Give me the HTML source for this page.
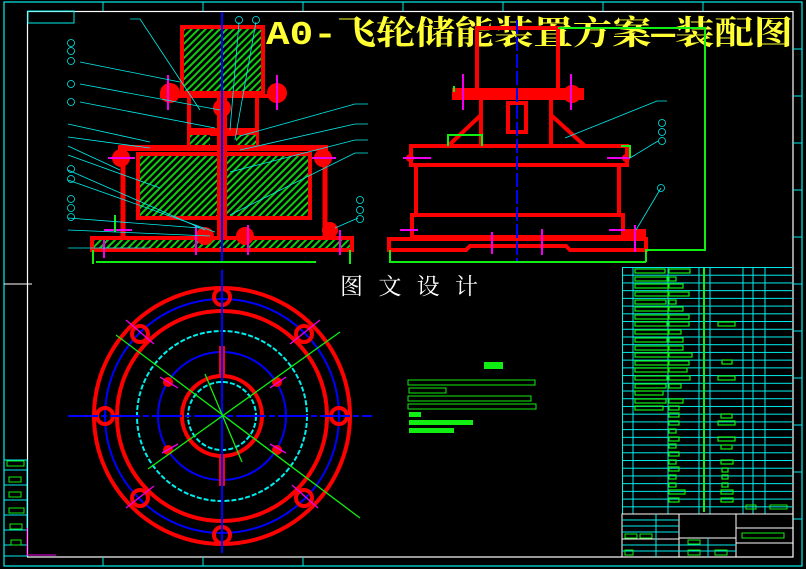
<!DOCTYPE html><html><head><meta charset="utf-8"><style>body{margin:0;background:#000}svg{display:block}</style></head><body>
<svg width="806" height="569" viewBox="0 0 806 569" xmlns="http://www.w3.org/2000/svg" font-family="Liberation Sans, Noto Sans CJK SC, sans-serif">
<defs>
<pattern id="h" width="5" height="5" patternUnits="userSpaceOnUse" patternTransform="rotate(45)"><rect width="5" height="5" fill="#000"/><rect width="2" height="5" fill="#1c1"/></pattern>
<pattern id="rows" width="200" height="7.72" patternUnits="userSpaceOnUse" y="267"><rect width="200" height="1" fill="#0ee"/></pattern>
</defs>
<rect width="806" height="569" fill="#000"/>
<rect x="4" y="2" width="798" height="564" fill="none" stroke="#0ee" stroke-width="1.2"/>
<rect x="27.5" y="11.5" width="765.5" height="545.5" fill="none" stroke="#fff" stroke-width="1.2"/>
<g stroke="#0ee" stroke-width="1"><line x1="103" y1="2" x2="103" y2="11"/><line x1="203" y1="2" x2="203" y2="11"/><line x1="303" y1="2" x2="303" y2="11"/><line x1="403" y1="2" x2="403" y2="11"/><line x1="503" y1="2" x2="503" y2="11"/><line x1="603" y1="2" x2="603" y2="11"/><line x1="703" y1="2" x2="703" y2="11"/>
<line x1="103" y1="557" x2="103" y2="566"/><line x1="203" y1="557" x2="203" y2="566"/><line x1="303" y1="557" x2="303" y2="566"/>
<line x1="793" y1="49" x2="802" y2="49"/><line x1="793" y1="96" x2="802" y2="96"/><line x1="793" y1="143" x2="802" y2="143"/><line x1="793" y1="190" x2="802" y2="190"/><line x1="793" y1="237" x2="802" y2="237"/><line x1="793" y1="284" x2="802" y2="284"/><line x1="793" y1="331" x2="802" y2="331"/><line x1="793" y1="378" x2="802" y2="378"/><line x1="793" y1="425" x2="802" y2="425"/><line x1="793" y1="472" x2="802" y2="472"/><line x1="793" y1="519" x2="802" y2="519"/>
<rect x="28" y="11" width="46" height="12" fill="none"/></g>
<line x1="4" y1="284" x2="32" y2="284" stroke="#fff"/>
<g fill="none" stroke="#0ee"><rect x="4" y="460" width="23" height="96"/><line x1="4" y1="470" x2="27" y2="470"/><line x1="4" y1="485" x2="27" y2="485"/><line x1="4" y1="500" x2="27" y2="500"/><line x1="4" y1="515" x2="27" y2="515"/><line x1="4" y1="530" x2="27" y2="530"/><line x1="4" y1="545" x2="27" y2="545"/></g>
<g fill="none" stroke="#1e1"><rect x="7" y="461" width="17" height="5"/><rect x="9" y="477" width="12" height="5"/><rect x="9" y="492" width="12" height="5"/><rect x="9" y="508" width="15" height="5"/><rect x="10" y="524" width="12" height="5"/><rect x="11" y="540" width="10" height="5"/></g>
<path d="M27 528V555H56" fill="none" stroke="#e0e"/>
<text x="266" y="44" font-size="33" font-weight="bold" fill="#ff3" font-family="Liberation Mono, Noto Serif CJK SC, serif" textLength="527" lengthAdjust="spacingAndGlyphs">A0-飞轮储能装置方案—装配图</text>
<text x="340" y="294" font-size="23" fill="#fff" font-family="Noto Serif CJK SC, serif" textLength="138" lengthAdjust="spacing">图文设计</text>
<g stroke="#f00" fill="none">
<rect x="182" y="27" width="81" height="66" fill="url(#h)" stroke-width="4"/>
<rect x="92" y="238" width="260" height="12" fill="url(#h)" stroke-width="4"/>
<rect x="138" y="154" width="172" height="64" fill="url(#h)" stroke-width="4"/>
<line x1="118" y1="148" x2="328" y2="148" stroke-width="6"/>
<line x1="189" y1="95" x2="189" y2="145" stroke-width="4"/><line x1="257" y1="95" x2="257" y2="145" stroke-width="4"/>
<line x1="123" y1="152" x2="123" y2="238" stroke-width="5"/><line x1="325" y1="152" x2="325" y2="238" stroke-width="5"/>
<line x1="160" y1="96" x2="286" y2="96" stroke-width="4"/>
<line x1="222" y1="95" x2="222" y2="238" stroke-width="10"/>
</g>
<g fill="#f00"><circle cx="170" cy="93" r="10"/><circle cx="277" cy="93" r="10"/><circle cx="121" cy="158" r="9"/><circle cx="323" cy="158" r="9"/><circle cx="222" cy="108" r="9"/><circle cx="330" cy="230" r="8"/><circle cx="205" cy="236" r="9"/><circle cx="245" cy="236" r="9"/><rect x="188" y="128" width="70" height="8"/></g>
<rect x="190" y="135" width="20" height="10" fill="url(#h)"/><rect x="236" y="135" width="20" height="10" fill="url(#h)"/>
<line x1="222" y1="12" x2="222" y2="262" stroke="#00f" stroke-width="2"/>
<g stroke="#e0e" stroke-width="2"><line x1="168" y1="75" x2="168" y2="110"/><line x1="277" y1="75" x2="277" y2="110"/><line x1="108" y1="158" x2="135" y2="158"/><line x1="312" y1="158" x2="336" y2="158"/><line x1="104" y1="230" x2="132" y2="230"/><line x1="104" y1="240" x2="104" y2="258"/><line x1="196" y1="225" x2="196" y2="255"/><line x1="248" y1="225" x2="248" y2="255"/><line x1="340" y1="230" x2="340" y2="255"/></g>
<g stroke="#1e1" stroke-width="2" fill="none"><line x1="96" y1="262" x2="316" y2="262"/><line x1="93" y1="250" x2="93" y2="264"/><line x1="350" y1="250" x2="350" y2="264"/><path d="M115 215V232"/></g>
<g stroke="#0ee" stroke-width="0.8" fill="none">
<path d="M130 19H140L200 110"/><path d="M80 62L180 82"/><path d="M80 84L220 110"/><path d="M80 102L215 128"/><path d="M68 124L150 142"/><path d="M68 137L150 148"/><path d="M68 146L120 170"/><path d="M68 155L160 188"/><path d="M68 170L205 230"/><path d="M68 180L215 232"/><path d="M68 218L200 228"/><path d="M68 230L210 236"/><path d="M68 248L150 248"/>
<path d="M368 104H355L240 136"/><path d="M368 124H355L240 150"/><path d="M368 140H355L230 172"/><path d="M368 153H355L230 215"/><path d="M358 218L335 228"/>
<path d="M239 22L230 130"/><path d="M256 22L235 140"/>
<circle cx="71" cy="43" r="3.5"/><circle cx="71" cy="51" r="3.5"/><circle cx="71" cy="61" r="3.5"/><circle cx="71" cy="84" r="3.5"/><circle cx="71" cy="102" r="3.5"/><circle cx="71" cy="169" r="3.5"/><circle cx="71" cy="179" r="3.5"/><circle cx="71" cy="199" r="3.5"/><circle cx="71" cy="208" r="3.5"/><circle cx="71" cy="217" r="3.5"/><circle cx="239" cy="20" r="3.5"/><circle cx="256" cy="20" r="3.5"/><circle cx="360" cy="200" r="3.5"/><circle cx="360" cy="210" r="3.5"/><circle cx="360" cy="219" r="3.5"/>
</g>
<g stroke="#f00" fill="none" stroke-width="4">
<rect x="477" y="28" width="81" height="66"/>
<rect x="454" y="90" width="128" height="8" fill="#f00"/>
<rect x="508" y="103" width="18" height="29"/>
<line x1="481" y1="98" x2="481" y2="146"/><line x1="551" y1="98" x2="551" y2="146"/>
<line x1="481" y1="115" x2="448" y2="146"/><line x1="551" y1="115" x2="585" y2="146"/>
<rect x="411" y="146" width="216" height="19"/>
<line x1="416" y1="165" x2="416" y2="216"/><line x1="619" y1="165" x2="619" y2="216"/>
<rect x="412" y="215" width="211" height="22"/>
<path d="M389 239H646V250H570L566 246H470L466 250H389Z"/>
</g>
<circle cx="572" cy="94" r="9" fill="#f00"/><circle cx="410" cy="158" r="4" fill="#f00"/><circle cx="626" cy="158" r="4" fill="#f00"/><rect x="624" y="229" width="22" height="10" fill="#f00"/>
<line x1="517" y1="20" x2="517" y2="262" stroke="#00f" stroke-width="2" stroke-dasharray="14 3"/>
<g stroke="#e0e" stroke-width="2"><line x1="463" y1="74" x2="463" y2="110"/><line x1="571" y1="74" x2="571" y2="110"/><line x1="403" y1="158" x2="431" y2="158"/><line x1="607" y1="158" x2="630" y2="158"/><line x1="492" y1="232" x2="492" y2="254"/><line x1="542" y1="229" x2="542" y2="255"/><line x1="635" y1="225" x2="635" y2="252"/><line x1="400" y1="230" x2="418" y2="230"/><line x1="609" y1="230" x2="625" y2="230"/></g>
<g stroke="#1e1" stroke-width="2" fill="none"><path d="M558 28H705V250H646V262"/><path d="M448 146V135H482V146"/><path d="M390 250V262H646"/><path d="M621 146H630V158"/><path d="M454 86V92"/></g>
<g stroke="#0ee" stroke-width="0.8" fill="none"><path d="M667 101H657L565 138"/><path d="M658 141L630 158"/><path d="M661 188L636 230"/><circle cx="662" cy="123" r="3.5"/><circle cx="662" cy="132" r="3.5"/><circle cx="662" cy="141" r="3.5"/><circle cx="661" cy="188" r="3.5"/></g>
<g fill="none">
<circle cx="222" cy="416" r="128" stroke="#f00" stroke-width="4"/>
<circle cx="222" cy="416" r="117" stroke="#00f" stroke-width="2"/>
<circle cx="222" cy="416" r="105" stroke="#f00" stroke-width="4"/>
<circle cx="222" cy="416" r="85" stroke="#0ee" stroke-width="2" stroke-dasharray="5 2"/>
<circle cx="222" cy="416" r="64" stroke="#00f" stroke-width="2"/>
<circle cx="222" cy="416" r="40" stroke="#f00" stroke-width="4"/>
<circle cx="222" cy="416" r="34" stroke="#0ee" stroke-width="2" stroke-dasharray="5 2"/>
<g stroke="#f00" stroke-width="4"><circle cx="222" cy="297" r="8"/><circle cx="222" cy="535" r="8"/><circle cx="105" cy="416" r="8"/><circle cx="339" cy="416" r="8"/><circle cx="140" cy="334" r="8"/><circle cx="304" cy="334" r="8"/><circle cx="140" cy="498" r="8"/><circle cx="304" cy="498" r="8"/></g>
</g>
<g fill="#f00"><circle cx="168" cy="382" r="5"/><circle cx="277" cy="382" r="5"/><circle cx="168" cy="450" r="5"/><circle cx="277" cy="450" r="5"/><rect x="219" y="346" width="6" height="28"/><rect x="219" y="456" width="6" height="30"/></g>
<g stroke="#00f" stroke-width="2"><line x1="68" y1="416" x2="372" y2="416" stroke-dasharray="30 3 6 3"/><line x1="222" y1="270" x2="222" y2="553"/></g>
<g stroke="#1e1" stroke-width="1.3"><line x1="116" y1="335" x2="360" y2="518"/><line x1="148" y1="469" x2="340" y2="332"/><line x1="205" y1="374" x2="242" y2="462"/></g>
<g stroke="#e0e" stroke-width="1.3"><line x1="126" y1="320" x2="154" y2="344"/><line x1="290" y1="344" x2="320" y2="320"/><line x1="126" y1="508" x2="154" y2="486"/><line x1="292" y1="485" x2="318" y2="508"/><line x1="160" y1="377" x2="178" y2="388"/><line x1="270" y1="388" x2="286" y2="377"/><line x1="162" y1="453" x2="178" y2="444"/><line x1="270" y1="444" x2="286" y2="453"/></g>
<g fill="none" stroke="#1e1"><rect x="408" y="380" width="127" height="5"/><rect x="409" y="388" width="37" height="5"/><rect x="408" y="396" width="123" height="5"/><rect x="408" y="404" width="128" height="5"/></g>
<rect x="484" y="362" width="19" height="7" fill="#1e1"/>
<g fill="#1e1"><rect x="409" y="412" width="12" height="5"/><rect x="409" y="420" width="64" height="5"/><rect x="409" y="428" width="45" height="5"/></g>
<rect x="622" y="267" width="171" height="247" fill="url(#rows)"/>
<g stroke="#0ee" stroke-width="1"><line x1="622.5" y1="267" x2="622.5" y2="514"/><line x1="633" y1="267" x2="633" y2="514"/><line x1="668" y1="267" x2="668" y2="514"/><line x1="699" y1="267" x2="699" y2="514"/><line x1="710" y1="267" x2="710" y2="514"/><line x1="743" y1="267" x2="743" y2="514"/><line x1="753" y1="267" x2="753" y2="514"/><line x1="765" y1="267" x2="765" y2="514"/></g>
<g fill="none" stroke="#1e1" stroke-width="1.2">
<rect x="635" y="269" width="30" height="4"/><rect x="635" y="277" width="32" height="4"/><rect x="635" y="284" width="33" height="4"/><rect x="635" y="292" width="33" height="4"/><rect x="635" y="300" width="31" height="4"/><rect x="635" y="307" width="33" height="4"/><rect x="635" y="315" width="33" height="4"/><rect x="635" y="322" width="32" height="4"/><rect x="635" y="330" width="33" height="4"/><rect x="635" y="338" width="32" height="4"/><rect x="635" y="346" width="33" height="4"/><rect x="635" y="353" width="33" height="4"/><rect x="635" y="361" width="33" height="4"/><rect x="635" y="368" width="33" height="4"/><rect x="635" y="376" width="32" height="4"/><rect x="635" y="384" width="31" height="4"/><rect x="635" y="391" width="28" height="4"/><rect x="635" y="399" width="31" height="4"/><rect x="635" y="406" width="28" height="4"/>
<rect x="669" y="269" width="21" height="4"/><rect x="669" y="277" width="7" height="4"/><rect x="669" y="284" width="14" height="4"/><rect x="669" y="292" width="20" height="4"/><rect x="669" y="300" width="7" height="4"/><rect x="669" y="307" width="14" height="4"/><rect x="669" y="315" width="20" height="4"/><rect x="669" y="322" width="20" height="4"/><rect x="669" y="330" width="12" height="4"/><rect x="669" y="338" width="14" height="4"/><rect x="669" y="346" width="14" height="4"/><rect x="669" y="353" width="23" height="4"/><rect x="669" y="361" width="20" height="4"/><rect x="669" y="368" width="18" height="4"/><rect x="669" y="376" width="21" height="4"/><rect x="669" y="384" width="12" height="4"/><rect x="669" y="399" width="14" height="4"/><rect x="669" y="406" width="10" height="4"/><rect x="669" y="413" width="10" height="4"/><rect x="669" y="421" width="10" height="4"/><rect x="669" y="429" width="7" height="4"/><rect x="669" y="437" width="10" height="4"/><rect x="669" y="444" width="7" height="4"/><rect x="669" y="452" width="10" height="4"/><rect x="669" y="460" width="7" height="4"/><rect x="669" y="467" width="10" height="4"/><rect x="669" y="475" width="7" height="4"/><rect x="669" y="483" width="7" height="4"/><rect x="669" y="490" width="16" height="4"/><rect x="669" y="498" width="10" height="4"/>
<rect x="718" y="322" width="17" height="4"/><rect x="722" y="360" width="10" height="4"/><rect x="718" y="376" width="17" height="4"/><rect x="721" y="414" width="11" height="4"/><rect x="718" y="421" width="17" height="4"/><rect x="718" y="437" width="17" height="4"/><rect x="721" y="445" width="11" height="4"/><rect x="721" y="460" width="12" height="4"/><rect x="722" y="468" width="6" height="4"/><rect x="722" y="475" width="6" height="4"/><rect x="722" y="483" width="6" height="4"/><rect x="721" y="490" width="12" height="4"/><rect x="721" y="498" width="12" height="4"/>
</g>
<g fill="#1e1"><rect x="703" y="268" width="2" height="244"/></g>
<rect x="622" y="514" width="171" height="43" fill="none" stroke="#fff"/>
<g stroke="#fff" fill="none"><line x1="679" y1="514" x2="679" y2="557"/><line x1="736" y1="514" x2="736" y2="557"/><line x1="736" y1="528" x2="793" y2="528"/><line x1="736" y1="543" x2="793" y2="543"/><line x1="622" y1="539" x2="679" y2="539"/><line x1="679" y1="538" x2="736" y2="538"/></g>
<g stroke="#0ee" fill="none"><line x1="622" y1="520" x2="679" y2="520"/><line x1="622" y1="526" x2="679" y2="526"/><line x1="622" y1="532" x2="679" y2="532"/><line x1="622" y1="545" x2="736" y2="545"/><line x1="622" y1="551" x2="736" y2="551"/><line x1="656" y1="514" x2="656" y2="557"/><line x1="708" y1="538" x2="708" y2="557"/></g>
<g fill="none" stroke="#1e1"><rect x="742" y="533" width="42" height="5"/><rect x="625" y="534" width="12" height="4"/><rect x="640" y="534" width="12" height="4"/><rect x="688" y="540" width="12" height="4"/><rect x="688" y="550" width="12" height="5"/><rect x="715" y="550" width="12" height="5"/><rect x="625" y="550" width="8" height="5"/><rect x="746" y="505" width="10" height="4"/><rect x="770" y="505" width="17" height="4"/></g>
<line x1="600" y1="262" x2="645" y2="262" stroke="#1e1" stroke-width="2"/>
</svg>
</body></html>
